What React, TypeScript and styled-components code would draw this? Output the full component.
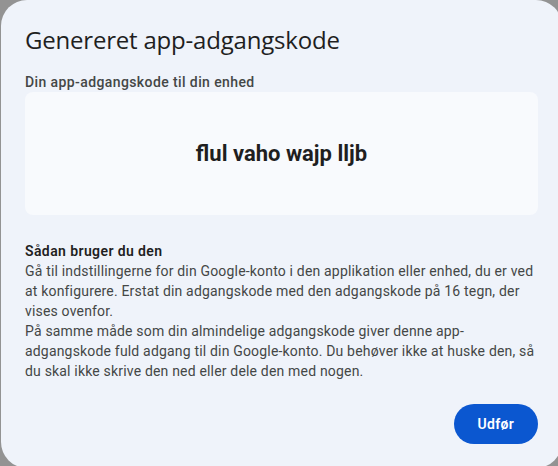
import React from "react";
import styled, { createGlobalStyle } from "styled-components";

const GlobalStyle = createGlobalStyle`
  html, body {
    margin: 0;
    padding: 0;
    width: 558px;
    height: 466px;
    overflow: hidden;
    background: #939393;
  }
  * { box-sizing: border-box; }
`;

const Scrim = styled.div`
  width: 558px;
  height: 466px;
  overflow: hidden;
  background: #939393;
  padding-left: 1px;
`;

const Dialog = styled.div`
  width: 561px;
  height: 468px;
  background: #eff3fa;
  border-radius: 26px;
  padding: 24px 24px 24px 24px;
  display: flex;
  flex-direction: column;
  font-family: Roboto, "Noto Sans", sans-serif;
  color: #444746;
`;

const Title = styled.h1`
  margin: 0;
  font-family: "Open Sans", Roboto, sans-serif;
  font-weight: 400;
  font-size: 24px;
  line-height: 32px;
  color: #1f1f1f;
  letter-spacing: -0.2px;
`;

const Label = styled.div`
  margin-top: 16px;
  font-size: 14px;
  font-weight: 500;
  line-height: 20px;
  letter-spacing: 0.4px;
  color: #444746;
`;

const CodeBox = styled.div`
  height: 123px;
  background: #f8fafd;
  border-radius: 8px;
  display: flex;
  align-items: center;
  justify-content: center;
`;

const Code = styled.span`
  font-family: Roboto, "Open Sans", sans-serif;
  font-weight: 700;
  font-size: 22px;
  color: #1f1f1f;
`;

const Heading = styled.div`
  margin-top: 26px;
  font-size: 14px;
  font-weight: 600;
  line-height: 20px;
  letter-spacing: 0.4px;
  color: #1f1f1f;
`;

const Paragraph = styled.p`
  margin: 0;
  font-size: 14px;
  line-height: 20px;
  letter-spacing: 0.18px;
  color: #444746;
`;

const Actions = styled.div`
  margin-top: auto;
  display: flex;
  justify-content: flex-end;
`;

const PrimaryButton = styled.button`
  height: 40px;
  padding: 0 24px;
  border: none;
  border-radius: 20px;
  background: #0b57d0;
  color: #ffffff;
  font-family: Roboto, "Noto Sans", sans-serif;
  font-size: 14px;
  font-weight: 600;
  letter-spacing: 0.3px;
  cursor: pointer;
`;

export default function App() {
  return (
    <>
      <GlobalStyle />
      <Scrim>
        <Dialog>
          <Title>Genereret app-adgangskode</Title>
          <Label>Din app-adgangskode til din enhed</Label>
          <CodeBox>
            <Code>flul vaho wajp lljb</Code>
          </CodeBox>
          <Heading>Sådan bruger du den</Heading>
          <Paragraph>
            Gå til indstillingerne for din Google-konto i den applikation eller enhed, du er ved
            at konfigurere. Erstat din adgangskode med den adgangskode på 16 tegn, der
            vises ovenfor.
          </Paragraph>
          <Paragraph>
            På samme måde som din almindelige adgangskode giver denne app-adgangskode fuld
            adgang til din Google-konto. Du behøver ikke at huske den, så du skal ikke skrive
            den ned eller dele den med nogen.
          </Paragraph>
          <Actions>
            <PrimaryButton>Udfør</PrimaryButton>
          </Actions>
        </Dialog>
      </Scrim>
    </>
  );
}
